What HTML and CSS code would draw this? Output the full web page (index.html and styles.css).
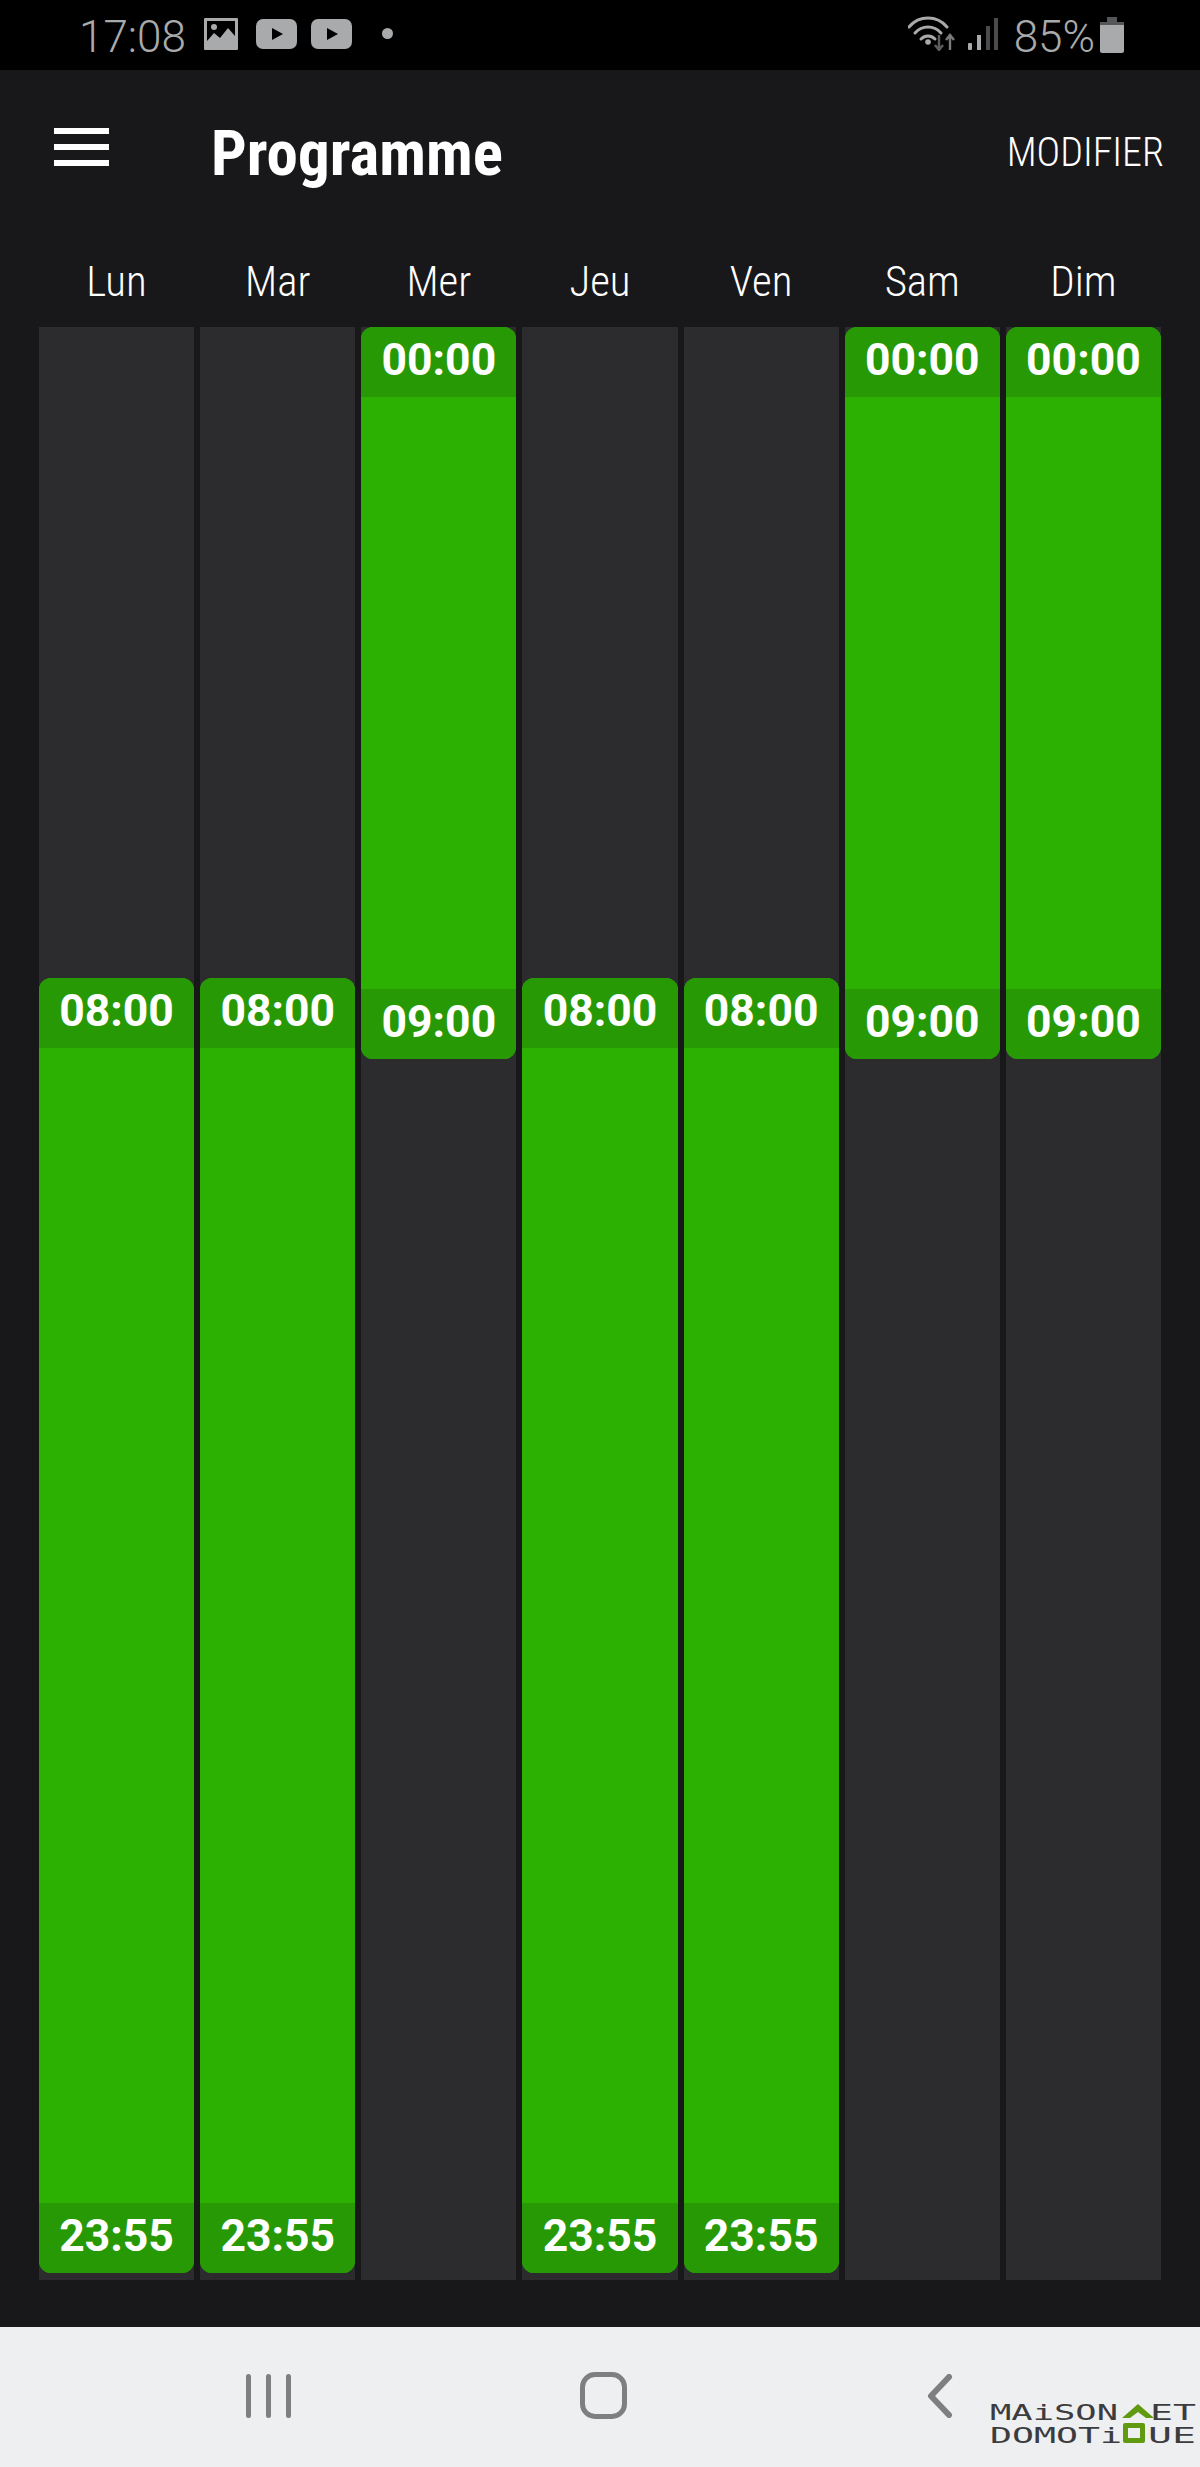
FILE: index.html
```html
<!DOCTYPE html>
<html lang="fr">
<head>
<meta charset="utf-8">
<title>Programme</title>
<link rel="stylesheet" href="styles.css">
</head>
<body>
<div class="statusbar">
  <span class="clock">17:08</span>
  <svg class="ic-image" viewBox="0 0 34 32"><path fill="#a9aaac" fill-rule="evenodd" d="M1 0h32a1 1 0 0 1 1 1v30a1 1 0 0 1-1 1H1a1 1 0 0 1-1-1V1a1 1 0 0 1 1-1zM3 3v20l7-8 6 5 8-10 7 8V3z"/><circle cx="10" cy="9" r="3" fill="#a9aaac"/></svg>
  <svg class="ic-yt" viewBox="0 0 41 30"><rect width="41" height="30" rx="7" fill="#a9aaac"/><path d="M16 9l11 6-11 6z" fill="#000"/></svg>
  <svg class="ic-yt ic-yt2" viewBox="0 0 41 30"><rect width="41" height="30" rx="7" fill="#a9aaac"/><path d="M16 9l11 6-11 6z" fill="#000"/></svg>
  <span class="dot"></span>
  <span class="status-fill"></span>
  <svg class="ic-wifi" viewBox="0 0 47 35">
    <g fill="none" stroke="#a9aaac" stroke-width="3" stroke-linecap="round">
      <path d="M1 11C11 -1 29 -1 39 11"/><path d="M7 17C14 9 26 9 33 17"/><path d="M13 23C17 19 23 19 27 23"/>
    </g>
    <circle cx="20" cy="26" r="2.8" fill="#a9aaac"/>
    <g fill="none" stroke="#5c5d5f" stroke-width="2.4"><path d="M31 19v15M27 29l4 5 4-5"/></g>
    <g fill="none" stroke="#7a7b7d" stroke-width="2.4"><path d="M42 34V19M38 24l4-5 4 5"/></g>
  </svg>
  <svg class="ic-signal" viewBox="0 0 30 32">
    <rect x="0" y="25" width="4" height="7" rx="1" fill="#a9aaac"/>
    <rect x="9" y="17" width="4" height="15" fill="#a9aaac"/>
    <rect x="18" y="8" width="4" height="24" fill="#4a4b4d"/>
    <rect x="26" y="0" width="4" height="32" fill="#4a4b4d"/>
  </svg>
  <span class="battery-text">85%</span>
  <svg class="ic-battery" viewBox="0 0 24 36"><path d="M7 0h10v5h7v3H0V5h7z" fill="#55565a"/><path d="M0 8h24v26a2 2 0 0 1-2 2H2a2 2 0 0 1-2-2z" fill="#a9aaac"/></svg>
</div>

<header class="toolbar">
  <div class="menu"><span></span><span></span><span></span></div>
  <h1 class="title">Programme</h1>
  <span class="action">MODIFIER</span>
</header>

<main class="schedule">
  <div class="days">
    <span class="day">Lun</span><span class="day">Mar</span><span class="day">Mer</span><span class="day">Jeu</span><span class="day">Ven</span><span class="day">Sam</span><span class="day">Dim</span>
  </div>
  <div class="tracks">
    <div class="track"><div class="lead" style="height:33.333%"></div><div class="block" style="height:66.32%"><div class="cap">08:00</div><div class="cap">23:55</div></div></div>
    <div class="track"><div class="lead" style="height:33.333%"></div><div class="block" style="height:66.32%"><div class="cap">08:00</div><div class="cap">23:55</div></div></div>
    <div class="track"><div class="block" style="height:37.5%"><div class="cap">00:00</div><div class="cap">09:00</div></div></div>
    <div class="track"><div class="lead" style="height:33.333%"></div><div class="block" style="height:66.32%"><div class="cap">08:00</div><div class="cap">23:55</div></div></div>
    <div class="track"><div class="lead" style="height:33.333%"></div><div class="block" style="height:66.32%"><div class="cap">08:00</div><div class="cap">23:55</div></div></div>
    <div class="track"><div class="block" style="height:37.5%"><div class="cap">00:00</div><div class="cap">09:00</div></div></div>
    <div class="track"><div class="block" style="height:37.5%"><div class="cap">00:00</div><div class="cap">09:00</div></div></div>
  </div>
</main>

<footer class="navbar">
  <div class="nav-recent"><span></span><span></span><span></span></div>
  <div class="nav-home"></div>
  <svg class="nav-back" viewBox="0 0 26 44"><path d="M22 3L4 22l18 19" fill="none" stroke="#7e7f81" stroke-width="6" stroke-linecap="round" stroke-linejoin="round"/></svg>
  <svg class="logo" viewBox="0 -8 206 60">
    <text class="logo-t" x="0" y="17" textLength="128" lengthAdjust="spacingAndGlyphs">MAiSON</text>
    <text class="logo-t" x="160" y="17" textLength="46" lengthAdjust="spacingAndGlyphs">ET</text>
    <path d="M132 15l16-14 16 14h-8l-8-6-8 6z" fill="#5f9a10"/>
    <text class="logo-t" x="0" y="40" textLength="132" lengthAdjust="spacingAndGlyphs">DOMOTi</text>
    <rect x="133" y="20" width="22" height="20" rx="2" fill="#5f9a10"/>
    <rect x="138" y="25" width="12" height="10" fill="#eeeff1"/>
    <text class="logo-t" x="158" y="40" textLength="48" lengthAdjust="spacingAndGlyphs">UE</text>
  </svg>
</footer>
</body>
</html>
```
FILE: styles.css
```css
* { box-sizing: border-box; }
html, body { margin: 0; padding: 0; }
body {
  width: 1200px;
  height: 2467px;
  display: flex;
  flex-direction: column;
  background: #18181a;
  font-family: Roboto, "Liberation Sans", sans-serif;
  overflow: hidden;
}

/* status bar */
.statusbar {
  height: 70px;
  flex: none;
  background: #000;
  display: flex;
  align-items: center;
  padding: 0 76px 0 79px;
  color: #a9aaac;
}
.clock {
  font-size: 44px;
  font-weight: 300;
  line-height: 70px;
  width: 125px;
  flex: none;
  position: relative;
  top: 2px;
}
.ic-image { width: 34px; height: 32px; flex: none; margin-top: -3px; }
.ic-yt { width: 41px; height: 30px; flex: none; margin-left: 18px; margin-top: -2px; }
.ic-yt2 { margin-left: 14px; }
.dot { width: 11px; height: 11px; border-radius: 50%; background: #a9aaac; margin-left: 30px; margin-top: -4px; flex: none; }
.status-fill { flex: 1; }
.ic-wifi { width: 47px; height: 35px; flex: none; margin-top: -3px; margin-right: 13px; }
.ic-signal { width: 30px; height: 32px; flex: none; margin-top: -2px; margin-right: 16px; }
.battery-text { font-size: 44px; font-weight: 300; line-height: 70px; flex: none; margin-right: 5px; position: relative; top: 2px; }
.ic-battery { width: 24px; height: 36px; flex: none; }

/* toolbar */
.toolbar {
  height: 164px;
  flex: none;
  display: flex;
  align-items: center;
  padding: 0 36px 0 54px;
  color: #fff;
}
.menu { width: 55px; height: 38px; display: flex; flex-direction: column; justify-content: space-between; margin-top: -10px; flex: none; }
.menu span { display: block; height: 6px; background: #fff; }
.title {
  margin: 2px 0 0 102px;
  font-size: 63px;
  font-weight: 700;
  font-stretch: 75%;
  line-height: 1;
  flex: 1;
}
.action {
  font-size: 40px;
  font-weight: 350;
  font-stretch: 75%;
}

/* schedule */
.schedule {
  flex: 1;
  display: flex;
  flex-direction: column;
  padding: 0 39px 47px;
}
.days {
  height: 93px;
  flex: none;
  display: grid;
  grid-template-columns: repeat(7, 1fr);
  column-gap: 6px;
  align-items: center;
}
.day {
  text-align: center;
  color: #fff;
  font-size: 43px;
  font-weight: 350;
  font-stretch: 75%;
}
.tracks {
  flex: 1;
  display: grid;
  grid-template-columns: repeat(7, 1fr);
  column-gap: 6px;
  min-height: 0;
}
.track {
  background: #2c2c2e;
  display: flex;
  flex-direction: column;
  height: 1953px;
}
.lead { flex: none; }
.block {
  flex: none;
  background: #2cb001;
  border-radius: 12px;
  overflow: hidden;
  display: flex;
  flex-direction: column;
  justify-content: space-between;
}
.cap {
  height: 70px;
  background: #279905;
  color: #fff;
  font-size: 44.5px;
  font-weight: 700;
  text-align: center;
  line-height: 66px;
}

/* nav bar */
.navbar {
  height: 140px;
  flex: none;
  background: #eeeff1;
  position: relative;
  display: flex;
  align-items: center;
  padding-left: 246px;
}
.nav-recent { width: 45px; height: 44px; display: flex; justify-content: space-between; flex: none; margin-top: -3px; }
.nav-recent span { width: 5px; background: #7e7f81; border-radius: 3px; }
.nav-home { width: 47px; height: 47px; border: 5px solid #7e7f81; border-radius: 15px; flex: none; margin-left: 289px; margin-top: -3px; }
.nav-back { width: 26px; height: 44px; flex: none; margin-left: 300px; margin-top: -3px; }
.logo { position: absolute; left: 990px; top: 68px; width: 206px; height: 60px; }
.logo-t {
  font-family: "DejaVu Sans Mono", monospace;
  font-size: 22px;
  fill: #3c3c3e;
}
```
